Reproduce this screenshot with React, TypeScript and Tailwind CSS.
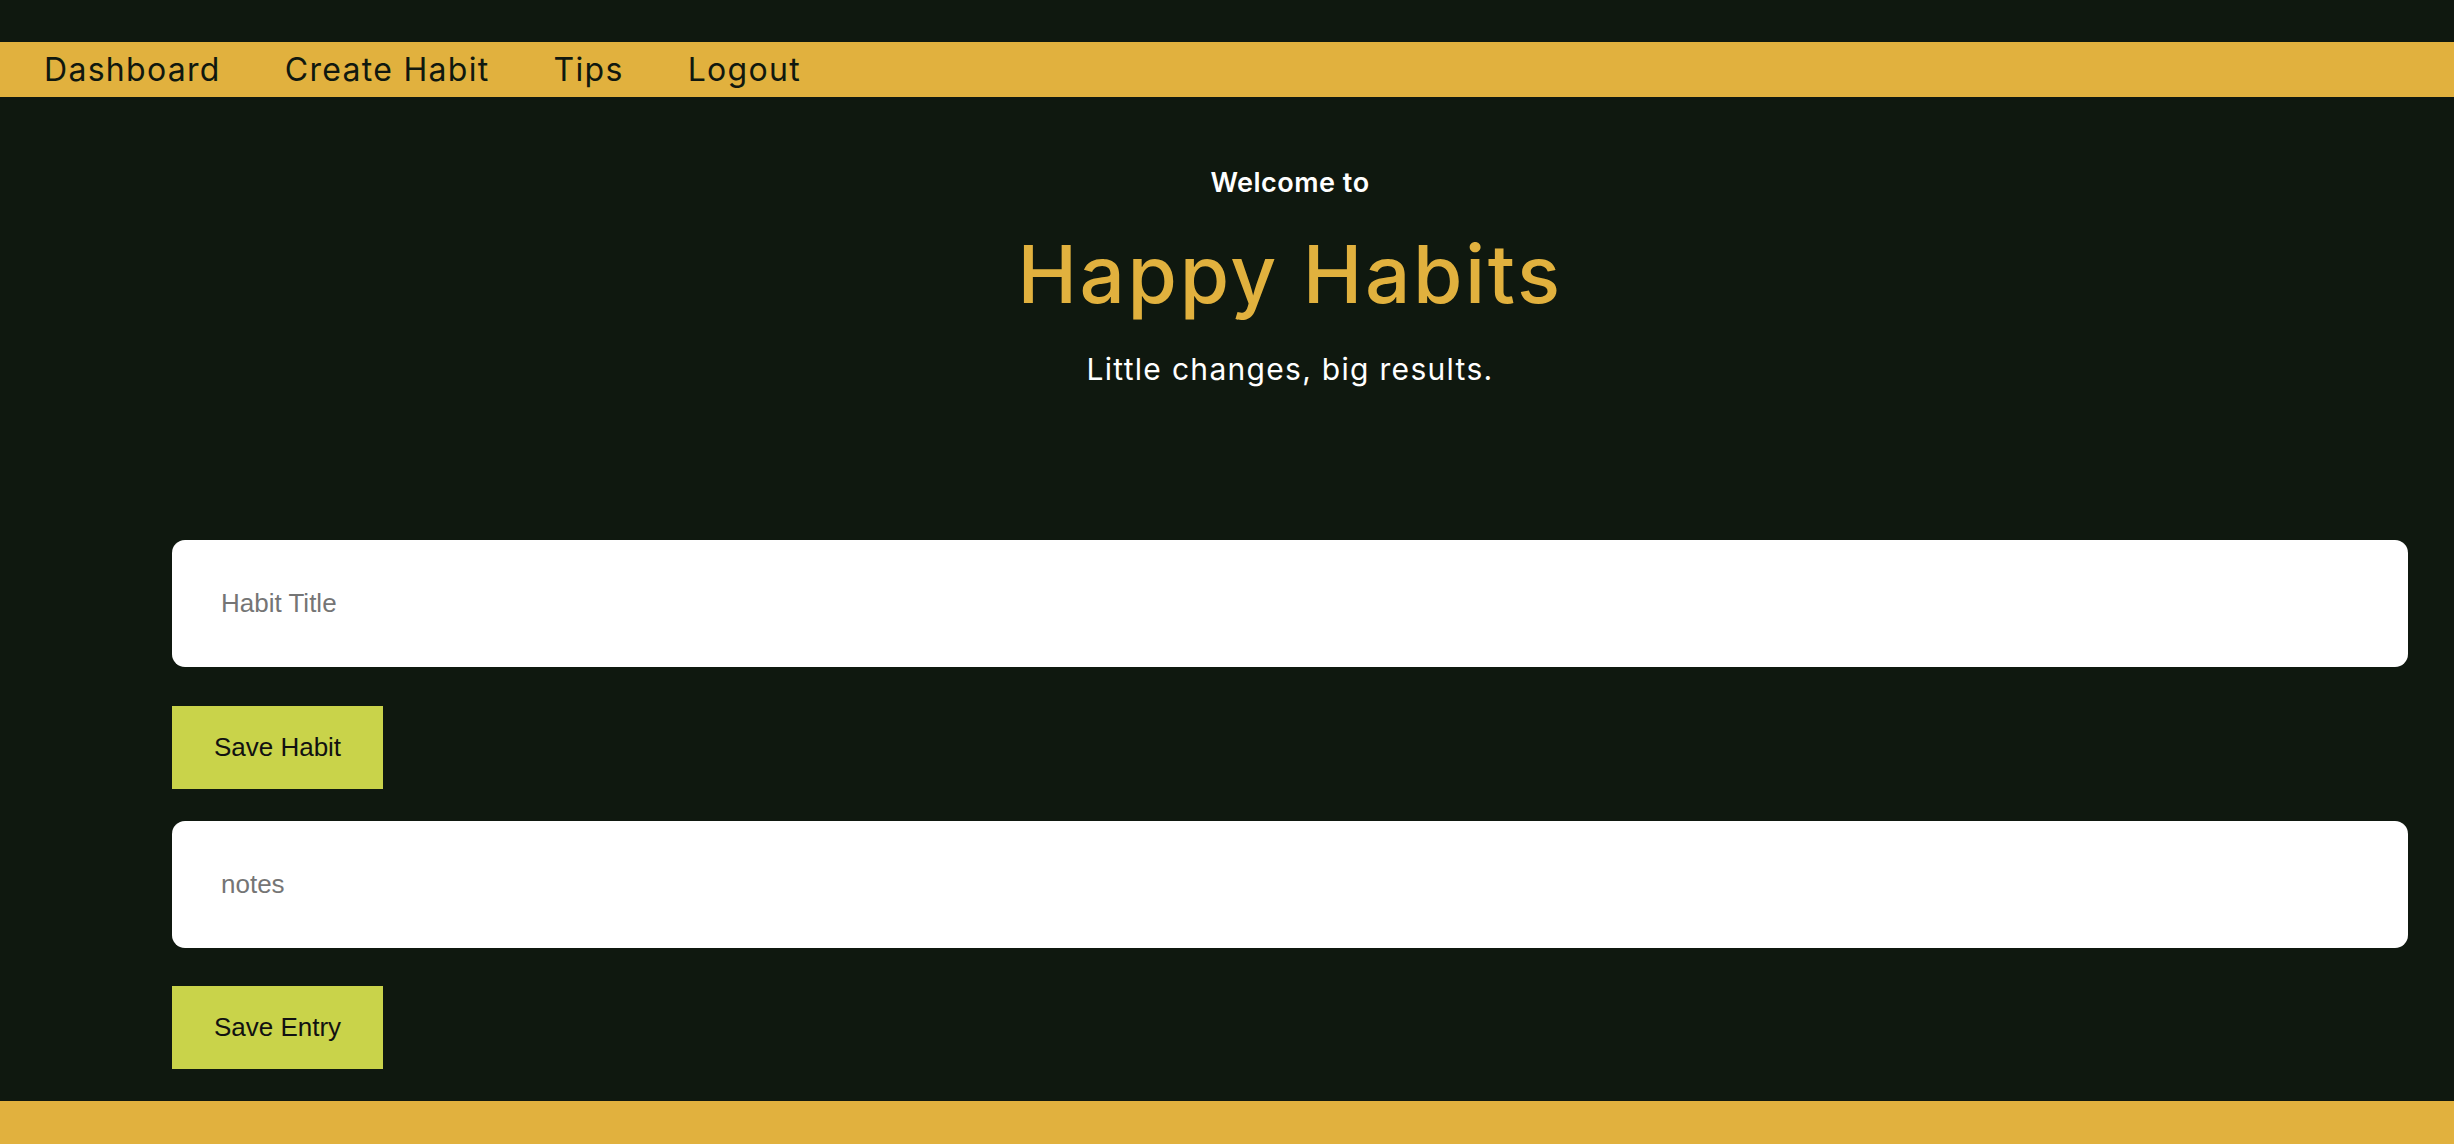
import { useState } from 'react'

const navLinks = ['Dashboard', 'Create Habit', 'Tips', 'Logout']

export default function App() {
  const [title, setTitle] = useState('')
  const [notes, setNotes] = useState('')

  return (
    <div className="min-h-screen bg-[#0f180f] pt-[42px] font-['Inter',sans-serif]">
      {/* Nav */}
      <nav className="h-[55px] bg-[#e1b13e] flex items-center pl-[44px] gap-[64px]">
        {navLinks.map(link => (
          <a key={link} href="#" className="text-[32px] text-[#10180f] tracking-[1.3px] leading-none">
            {link}
          </a>
        ))}
      </nav>

      <main className="ml-[172px] mr-[46px]">
        {/* Hero */}
        <section className="text-center pt-[66px]">
          <p className="text-[27px] leading-[40px] font-semibold text-white tracking-[0.5px]">Welcome to</p>
          <h1 className="mt-[21px] text-[80px] leading-[100px] font-medium text-[#e1b13e] tracking-[2.6px]">Happy Habits</h1>
          <p className="mt-[25px] text-[30px] leading-[40px] text-white tracking-[1.3px]">Little changes, big results.</p>
        </section>

        {/* Forms */}
        <div className="mt-[151px] font-['Liberation_Sans',Arial,sans-serif]">
          <input
            type="text"
            placeholder="Habit Title"
            value={title}
            onChange={e => setTitle(e.target.value)}
            className="block w-full h-[127px] rounded-[13px] bg-white pl-[49px] text-[26px] text-black placeholder-[#757575] focus:outline-none"
          />
          <button className="mt-[39px] block w-[211px] h-[83px] bg-[#c9d34a] text-[26px] text-[#111]">
            Save Habit
          </button>
          <input
            type="text"
            placeholder="notes"
            value={notes}
            onChange={e => setNotes(e.target.value)}
            className="mt-[32px] block w-full h-[127px] rounded-[13px] bg-white pl-[49px] text-[26px] text-black placeholder-[#757575] focus:outline-none"
          />
          <button className="mt-[38px] block w-[211px] h-[83px] bg-[#c9d34a] text-[26px] text-[#111]">
            Save Entry
          </button>
        </div>
      </main>

      <footer className="mt-[32px] h-[60px] bg-[#e1b13e]" />
    </div>
  )
}
